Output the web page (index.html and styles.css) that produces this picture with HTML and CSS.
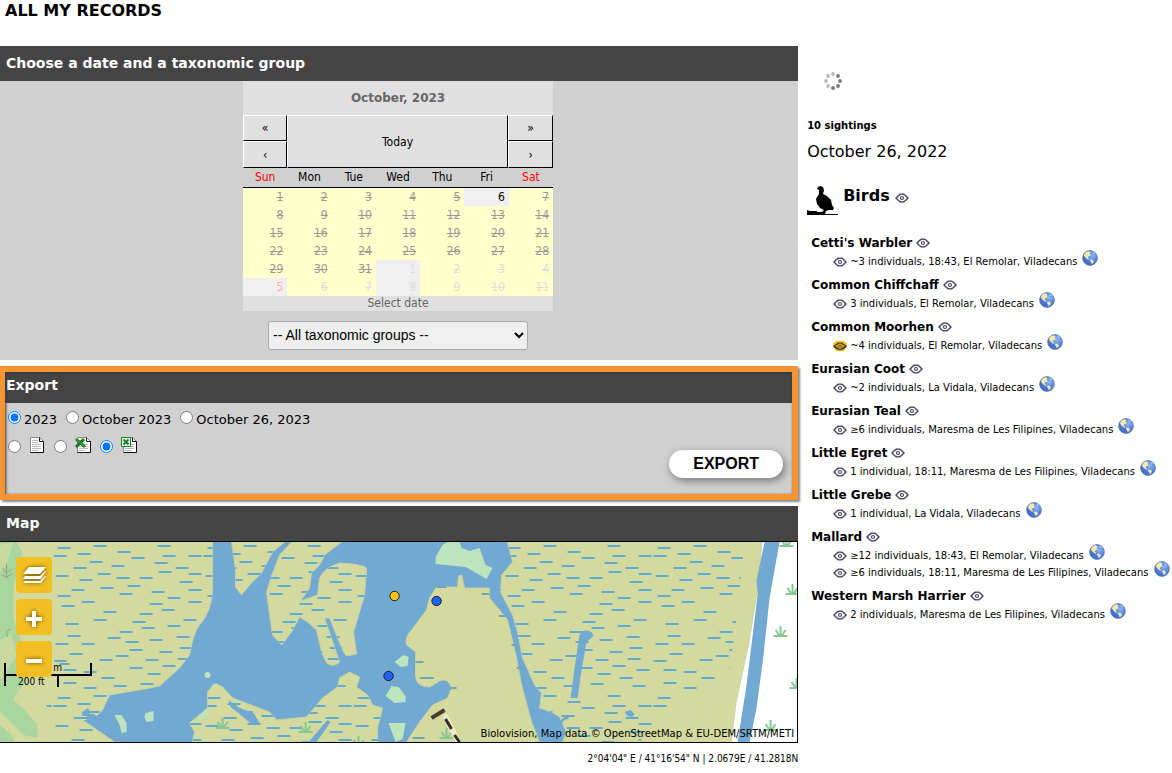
FILE: index.html
```html
<!DOCTYPE html>
<html lang="en">
<head>
<meta charset="utf-8">
<title>All my records</title>
<link rel="stylesheet" href="styles.css">
</head>
<body>
<svg class="defs" aria-hidden="true">
  <symbol id="eye" viewBox="0 0 14 10">
    <path d="M0 5L3 2 5 .5H9L11 2 14 5 11 8 9 9.500H5L3 8Z" fill="#4a4560"/>
    <path d="M2 5L4.500 2.500v5zM12 5L9.500 2.500v5z" fill="#fff"/>
    <circle cx="7" cy="5" r="2.700" fill="#4a4560" stroke="#fff" stroke-width="1.200"/>
    <circle cx="7" cy="5" r=".9" fill="#fff"/>
  </symbol>
  <symbol id="eye-marked" viewBox="0 0 14 10">
    <path d="M0 3L3 0H11L14 3 13 7 11 10H3L1 7Z" fill="#ffc20e"/>
    <path d="M0 5L3 3 5 1.500H9L11 3 14 5 11 8 9 9H5L3 8Z" fill="#4a4032"/>
    <path d="M2.500 5L4.500 3.500v3zM11.500 5L9.500 3.500v3z" fill="#ffc20e"/>
    <circle cx="7" cy="5.200" r="2.200" fill="#4a4032" stroke="#ffc20e"/>
    <circle cx="7" cy="5.200" r=".8" fill="#ffc20e"/>
  </symbol>
  <radialGradient id="sea" cx=".65" cy=".35" r=".8">
    <stop offset="0" stop-color="#8fb4f5"/><stop offset=".55" stop-color="#4a7bdc"/><stop offset="1" stop-color="#3a5fae"/>
  </radialGradient>
  <symbol id="globe" viewBox="0 0 16 16">
    <circle cx="8" cy="8" r="7.4" fill="url(#sea)" stroke="#5f7fb4" stroke-width=".8"/>
    <path d="M2.400 4Q4 1.500 6.500 1.200L8.500 2.200 7.800 3.800 8.800 5.200 6.500 6.200 5.600 8 7.500 8.800 6.200 9.800 3.500 7.800 2 5.500z" fill="#f3e9a6"/>
    <path d="M8.200 9.400l2.500 .4 1.300 1.600-1 1.800-1.400 1-.4-2-1.200-1.200z" fill="#f3e9a6"/>
    <path d="M10 1.600l3 2-1.200.4z" fill="#d7e6ff"/>
  </symbol>
  <symbol id="sheet" viewBox="0 0 14 16">
    <path d="M.5 .5h9l4 4v11H.5z" fill="#fff" stroke="#888"/>
    <path d="M9.500 .5v4h4v11H.5" fill="none" stroke="#111"/>
    <path d="M2 3.500h6M2 5.500h6M2 7.500h9M2 9.500h9M2 11.500h9M2 13.500h6" stroke="#bbb" fill="none"/>
  </symbol>
</svg>

<h1 class="page-title">ALL MY RECORDS</h1>
<div class="layout">
  <main class="main">
    <section class="panel">
      <h2 class="bar">Choose a date and a taxonomic group</h2>
      <div class="picker">
        <div class="calendar">
          <div class="cal-title">October, 2023</div>
          <div class="cal-nav">
            <button class="prev-year" aria-label="Previous year">«</button>
            <button class="today">Today</button>
            <button class="next-year" aria-label="Next year">»</button>
            <button class="prev-month" aria-label="Previous month">‹</button>
            <button class="next-month" aria-label="Next month">›</button>
          </div>
          <table class="days">
            <thead><tr><th class="weekend">Sun</th><th>Mon</th><th>Tue</th><th>Wed</th><th>Thu</th><th>Fri</th><th class="weekend">Sat</th></tr></thead>
            <tbody>
              <tr><td>1</td><td>2</td><td>3</td><td>4</td><td>5</td><td class="open current">6</td><td>7</td></tr>
              <tr><td>8</td><td>9</td><td>10</td><td>11</td><td>12</td><td>13</td><td>14</td></tr>
              <tr><td>15</td><td>16</td><td>17</td><td>18</td><td>19</td><td>20</td><td>21</td></tr>
              <tr><td>22</td><td>23</td><td>24</td><td>25</td><td>26</td><td>27</td><td>28</td></tr>
              <tr><td>29</td><td>30</td><td>31</td><td class="other open">1</td><td class="other">2</td><td class="other">3</td><td class="other">4</td></tr>
              <tr><td class="open sunday">5</td><td class="other">6</td><td class="other">7</td><td class="other open">8</td><td class="other">9</td><td class="other">10</td><td class="other">11</td></tr>
            </tbody>
          </table>
          <div class="cal-foot">Select date</div>
        </div>
        <select class="groups" aria-label="Taxonomic group"><option>-- All taxonomic groups --</option></select>
      </div>
    </section>

    <section class="panel export">
      <h2 class="bar">Export</h2>
      <form class="export-form">
        <div class="periods">
          <label><input type="radio" name="period" checked>2023</label>
          <label><input type="radio" name="period">October 2023</label>
          <label><input type="radio" name="period">October 26, 2023</label>
        </div>
        <div class="formats">
          <label><input type="radio" name="format" aria-label="Text"><svg class="doc" viewBox="0 0 16 16"><use href="#sheet" x="1" width="14" height="16"/></svg></label>
          <label><input type="radio" name="format" aria-label="XLS"><svg class="doc" viewBox="0 0 16 16"><use href="#sheet" x="2" width="14" height="16"/><path d="M1 2l9 8M9 2l-8 8" stroke="#17701d" stroke-width="3"/><path d="M1 2l9 8" stroke="#49b64c" stroke-width="1"/></svg></label>
          <label><input type="radio" name="format" aria-label="XLSX" checked><svg class="doc" viewBox="0 0 16 16"><use href="#sheet" x="2" width="14" height="16"/><path d="M.5 .5h9v9h-9z" fill="#e5f5e5" stroke="#17802a"/><path d="M2.500 2.500l5 5M7.500 2.500l-5 5" stroke="#17802a" stroke-width="2"/></svg></label>
        </div>
        <button type="button" class="export-btn">EXPORT</button>
      </form>
    </section>

    <section class="panel">
      <h2 class="bar">Map</h2>
      <div class="map">
        <svg class="tiles" viewBox="0 542 798 200" preserveAspectRatio="xMidYMid slice" role="img" aria-label="Map of the sightings">
          <defs>
            <path id="dashes" d="M5 7h13M41 5h13M1 15h13M25 13h13M65 11h13M37 21h13M59 25h13M79 17h13M105 5h13M110 15h13M102 22h13M123 27h13M136 15h13M21 27h13M3 35h13M27 39h13M45 33h13M64 37h13M75 45h13M87 37h13M106 31h13M136 33h13M127 41h13M136 49h13M19 49h13M48 47h13M5 55h13M67 53h13M99 51h13M115 57h13M136 61h13M29 61h13M9 65h13M51 71h13M87 73h13M97 63h13M109 69h13M131 79h13M41 79h13M13 83h13M80 81h13M67 91h13M89 87h13M115 85h13M124 96h13M55 97h13M15 95h13M29 103h13M3 103h13M73 101h13M97 99h13M17 113h13M47 119h13M63 115h13M77 109h13M107 111h13M11 129h13M1 120h13M49 137h13M77 127h13M93 119h13M31 147h13M11 142h13M61 145h13M110 125h13M127 107h13M125 118h13M134 129h13M95 133h13M117 137h13M88 143h13M130 145h13M31 131h13"/>
            <pattern id="marsh" x="53" y="541" width="150" height="150" patternUnits="userSpaceOnUse">
              <path d="M0 0" />
              <g stroke="#b5dfd8" stroke-width="4"><use href="#dashes"/></g>
              <g stroke="#78a8a0" stroke-width="2"><use href="#dashes"/></g>
            </pattern>
            <g id="reed" fill="none" stroke="#85c795" stroke-width="2"><path d="M-7 4H7M0 4V-6M-1 4L-5-2M1 4L5-2"/></g>
            <path id="b" d="M232 542L234 556 236 570V587L242 595 250 585 262 573 273 552 285 542Z"/>
            <path id="c" d="M292 542L280 555 272 576 267 592 270 615 273 635 282 645 292 632 300 617 308 622 317 630 322 652 327 663Q334 668 340 662L335 647 325 618H330L338 638 344 652 347 656 357 654 354 632 360 612 365 595 367 568Q362 564 340 563 324 568 320 578L318 595 301 601 310 588 312 572Q320 568 325 555L342 542Z"/>
            <path id="f" d="M193 742L195 732 190 723 208 708 208 692 215 683 223 687 233 698 270 712 277 720 307 717 323 698 338 687 340 678 350 672 360 677 357 687 368 695 373 705 383 708 378 728V742Z"/>
            <path id="a" d="M0 542H213V590Q212 612 200 625 194 632 190 655L180 668 160 686 145 689 110 695 103 710 97 716 88 708 82 712 83 720 92 726 115 742H0Z"/>
            <path id="e" d="M508 542L513 562 502 575 501 592 513 615 518 632 523 658 535 685 542 693 540 708 552 712 560 717 567 732 563 742H732L737 702 750 642 758 592 763 542Z"/>
          </defs>
          <path d="M0 542h798v200H0z" fill="#71a9d2"/>
          <g fill="#d4d99e" stroke="#c6d2a0">
            <use href="#a"/><use href="#b"/><use href="#c"/><use href="#f"/><use href="#e"/>
            <path d="M437 587H458L459 576 462 575 465 588H490V598L508 620 517 658 522 685 532 722 540 742H407L420 722 433 705 448 698 452 688Q448 677 440 681L430 687Q416 687 416 675V652L407 645Q405 637 412 630L427 610 430 598Z"/>
          </g>
          <path d="M0 542H17L23 552 14 587 14 620 27 655Q35 675 17 693L14 700 25 710 38 725V738L24 735 0 711Z" fill="#a9d59e"/>
          <path d="M0 545l14-3-8 25-6 5zM0 640l12-6 5 22-17 25z" fill="#c8d99e"/>
          <path d="M0 725l12 9 3 8H0z" fill="#a9d59e"/>
          <g fill="url(#marsh)"><use href="#b"/><use href="#c"/><use href="#f"/>
            <path d="M53 542H213V590Q212 612 200 625 194 632 190 655L180 668 160 686 145 689 110 695 100 712 92 726 102 742H60L45 700 55 680Z"/>
            <path d="M508 542L513 562 502 575 501 592 513 615 518 632 523 658 535 685 542 693 540 708 552 712 560 717 567 732 563 742H640L665 709 730 670 738 610 745 542Z"/>
          </g>
          <path d="M416 662h8M420 678h14M413 738h12M507 616h-8M512 645h6M517 668h6M450 688h7M437 587h10M482 594h8M60 664h10" stroke="#6fa8b0" stroke-width="2"/>
          <g fill="#71a9d2">
            <path d="M229 700L240 708 254 713 260 723 253 725 240 714 231 707zM328 720l3 2-14 20h-8zM580 635q4-7 12-3l2 4-7 6-5 28-4 28h-7l4-30z"/>
            <path d="M559 724q4-8 10-8v3q-7 0-7 8zM625 712l6-2 4 4-2 3-5-1z"/>
          </g>
          <g fill="#bde4bd">
            <path d="M436 557L443 545 448 542H460L462 548 470 551 480 548 486 565 493 568 487 579 475 572 466 567 436 564zM395 662l9-7 5 2-1 9-7 1zM386 696l6-10 7 1 7 9v6l-11 1zM389 723h17l-3 16-7 3zM115 715h7l5 8v9l-5 1-2-8zM146 713l8-2v10l-7 1-2-5zM198 718l8-9 3 1-3 9z"/>
            <circle cx="208" cy="675" r="3"/>
          </g>
          <path d="M763 542H798V742H732L737 702 750 642 758 592z" fill="#fff"/>
          <path d="M765 542H780L770 598 764 655 757 708 750 742H738L747 685 758 595 757 580z" fill="#71a9d2"/>
          <use href="#reed" x="793" y="590"/><use href="#reed" x="781" y="632"/><use href="#reed" x="797" y="684"/><use href="#reed" x="771" y="726"/><use href="#reed" x="787" y="542"/>
          <use href="#reed" x="223" y="724"/><use href="#reed" x="306" y="728"/><use href="#reed" x="359" y="742"/><use href="#reed" x="447" y="734"/>
          <path d="M7 564v15M3 568l4 5 5-4M2 575l5 2 5-3M11 629q-6 2-3 8" fill="none" stroke="#91aa79"/>
          <path d="M432 718l13-8" stroke="#4d3931" stroke-width="4"/>
          <path d="M445 715l14 27" stroke="#eee9c8" stroke-width="5"/>
          <path d="M446 719l6 10M455 735l5 7" stroke="#332d2b" stroke-width="3"/>
          <g stroke="#222"><circle cx="395" cy="596" r="4.700" fill="#ffc20e"/><circle cx="437" cy="601" r="4.700" fill="#1f62ff"/><circle cx="389" cy="676" r="4.700" fill="#1f62ff"/></g>
        </svg>
        <div class="scale">
          <svg viewBox="0 0 90 26" width="90" height="26"><path d="M1 1v23M1 13h87M87 1v13M54 13v12" fill="none" stroke="#000" stroke-width="2"/></svg>
          <span class="metric">20 m</span><span class="imperial">200 ft</span>
        </div>
        <div class="tools">
          <button aria-label="Layers"><svg viewBox="0 0 36 36"><g fill="#fff"><path d="M13 10h17l-6 7H7z"/><path d="M9 19h15l5-5h1l-5 8H7zM9 24h15l5-5h1l-5 7H7z"/></g></svg></button>
          <button aria-label="Zoom in"><svg viewBox="0 0 36 36"><path d="M10 20h16M18 12v16" stroke="#fff" stroke-width="4"/></svg></button>
          <button aria-label="Zoom out"><svg viewBox="0 0 36 36"><path d="M10 20h16" stroke="#fff" stroke-width="4"/></svg></button>
        </div>
        <div class="credit">Biolovision, Map data © OpenStreetMap &amp; EU-DEM/SRTM/METI</div>
      </div>
      <p class="coords">2°04'04" E / 41°16'54" N | 2.0679E / 41.2818N</p>
    </section>
  </main>

  <aside class="records">
    <svg class="spinner" viewBox="0 0 18 18" aria-label="Loading"><g fill="#bbb"><circle cx="9" cy="2" r="1.900"/><circle cx="4" cy="4" r="1.900"/><circle cx="2" cy="9" r="1.900"/><circle cx="4" cy="14" r="1.900"/></g><g fill="#777"><circle cx="14" cy="4" r="1.900"/><circle cx="16" cy="9" r="1.900"/><circle cx="14" cy="14" r="1.900"/><circle cx="9" cy="16" r="1.900"/></g></svg>
    <p class="count">10 sightings</p>
    <p class="date">October 26, 2022</p>
    <h2 class="group"><svg class="bird" viewBox="0 0 31 30" aria-hidden="true"><path d="M10 3l1-2 2-1 3 1 1 3-1 4 4 2 4 4 1 5 2 3-1 2h-4l-3 1-1 3h13v1H0v-5l3 1h7v1h5l2-2-4-2-3-4-1-5 3-5V4z"/></svg><span>Birds</span><svg class="eye"><use href="#eye"/></svg></h2>
    <h3>Cetti's Warbler<svg class="eye"><use href="#eye"/></svg></h3>
    <p class="obs"><svg class="eye"><use href="#eye"/></svg><span>~3 individuals, 18:43, El Remolar, Viladecans</span><svg class="globe"><use href="#globe"/></svg></p>
    <h3>Common Chiffchaff<svg class="eye"><use href="#eye"/></svg></h3>
    <p class="obs"><svg class="eye"><use href="#eye"/></svg><span>3 individuals, El Remolar, Viladecans</span><svg class="globe"><use href="#globe"/></svg></p>
    <h3>Common Moorhen<svg class="eye"><use href="#eye"/></svg></h3>
    <p class="obs"><svg class="eye"><use href="#eye-marked"/></svg><span>~4 individuals, El Remolar, Viladecans</span><svg class="globe"><use href="#globe"/></svg></p>
    <h3>Eurasian Coot<svg class="eye"><use href="#eye"/></svg></h3>
    <p class="obs"><svg class="eye"><use href="#eye"/></svg><span>~2 individuals, La Vidala, Viladecans</span><svg class="globe"><use href="#globe"/></svg></p>
    <h3>Eurasian Teal<svg class="eye"><use href="#eye"/></svg></h3>
    <p class="obs"><svg class="eye"><use href="#eye"/></svg><span>≥6 individuals, Maresma de Les Filipines, Viladecans</span><svg class="globe"><use href="#globe"/></svg></p>
    <h3>Little Egret<svg class="eye"><use href="#eye"/></svg></h3>
    <p class="obs"><svg class="eye"><use href="#eye"/></svg><span>1 individual, 18:11, Maresma de Les Filipines, Viladecans</span><svg class="globe"><use href="#globe"/></svg></p>
    <h3>Little Grebe<svg class="eye"><use href="#eye"/></svg></h3>
    <p class="obs"><svg class="eye"><use href="#eye"/></svg><span>1 individual, La Vidala, Viladecans</span><svg class="globe"><use href="#globe"/></svg></p>
    <h3>Mallard<svg class="eye"><use href="#eye"/></svg></h3>
    <p class="obs"><svg class="eye"><use href="#eye"/></svg><span>≥12 individuals, 18:43, El Remolar, Viladecans</span><svg class="globe"><use href="#globe"/></svg></p>
    <p class="obs"><svg class="eye"><use href="#eye"/></svg><span>≥6 individuals, 18:11, Maresma de Les Filipines, Viladecans</span><svg class="globe"><use href="#globe"/></svg></p>
    <h3>Western Marsh Harrier<svg class="eye"><use href="#eye"/></svg></h3>
    <p class="obs"><svg class="eye"><use href="#eye"/></svg><span>2 individuals, Maresma de Les Filipines, Viladecans</span><svg class="globe"><use href="#globe"/></svg></p>
  </aside>
</div>
</body>
</html>
```
FILE: styles.css
```css
* { box-sizing: border-box; }
body { margin: 0; background: #fff; color: #000; font-family: Verdana, "DejaVu Sans", sans-serif; overflow-x: hidden; }
h1, h2, h3, p { margin: 0; }
svg { flex: none; }
.defs { position: absolute; width: 0; height: 0; }
.page-title { padding: 1px 5px 25px; font-size: 16px; line-height: 20px; }
.layout { display: grid; grid-template-columns: minmax(0, 68.1%) minmax(0, 1fr); }
.main { display: flex; flex-direction: column; gap: 6px; }
.bar { height: 35px; padding: 0 6px; background: #444; color: #fff; font-size: 14px; line-height: 34px; }
.picker { display: flex; flex-direction: column; align-items: center; gap: 10px; padding: 0 2px 10px 0; background: #d0d0d0; }
.calendar { width: 310px; background: #e0e0e0; color: #000; font: 12px/18px "DejaVu Sans Condensed", sans-serif; }
.cal-title { height: 34px; color: #666; font: bold 12px/34px Verdana, "DejaVu Sans", sans-serif; text-align: center; }
.cal-nav { display: grid; grid-template-columns: 44px 1fr 45px; grid-template-rows: 26px 27px; }
.cal-nav button { padding: 0; border: 1px solid; border-color: #fff #000 #000 #fff; border-radius: 0; background: #e0e0e0; color: #000; font: inherit; }
.cal-nav .today { grid-row: 1 / 3; grid-column: 2; }
.cal-nav .prev-month { grid-column: 1; }
.cal-nav .next-month { grid-column: 3; }
.days { width: 100%; table-layout: fixed; border-collapse: collapse; }
.days th { height: 19px; padding: 0; border-bottom: 1px solid #000; background: #d0d0d0; font-weight: normal; }
.days .weekend { color: #f00; }
.days td { height: 18px; padding: 0 4px 0 0; background: #ffc; color: #999; text-align: right; text-decoration: line-through; }
.days .other { color: #ddd; }
.days .open { background: #efefef; text-decoration: none; }
.days .current { color: #000; }
.days .sunday { color: #faa; }
.cal-foot { height: 15px; color: #666; line-height: 15px; text-align: center; }
.groups { width: 260px; height: 29px; padding: 0; border: 1px solid #aaa; border-radius: 3px; background: #efefef; color: #000; font: 14px "Liberation Sans", Arial, sans-serif; }

.export { position: relative; height: 134px; padding-top: 2px; background: #444; }
.export::after { content: ""; position: absolute; inset: 0; border: 6px solid #f79433; border-left-width: 5px; box-shadow: 2px 2px 2px #888, inset 1px 1px 3px #333; pointer-events: none; }
.export-form { height: 97px; padding: 6px 15px 0 8px; background: #d0d0d0; font-size: 13px; }
.periods, .formats { display: flex; gap: 9px; }
.periods { line-height: 21px; }
.periods label { display: flex; gap: 3px; }
.export-form input { width: 13px; height: 13px; margin: 2px 0 0; }
.formats { padding-top: 6px; }
.formats label { display: flex; gap: 8px; }
.formats input { margin-top: 4px; }
.doc { width: 16px; height: 16px; margin-top: 1px; }
.export-btn { display: block; width: 114px; height: 28px; margin: -3px 0 0 auto; border: 0; border-radius: 14px; background: #fff; color: #000; box-shadow: 2px 3px 8px #777; font: bold 16px "Liberation Sans", Arial, sans-serif; }

.map { position: relative; height: 202px; border: 1px solid #000; border-left: 0; overflow: hidden; }
.tiles { display: block; width: 100%; height: 200px; }
.scale { position: absolute; left: 4px; top: 120px; height: 26px; font: 10px/12px "DejaVu Sans Condensed", sans-serif; }
.metric { position: absolute; left: 35px; top: 0; white-space: nowrap; }
.imperial { position: absolute; left: 14px; top: 14px; white-space: nowrap; }
.tools { position: absolute; left: 16px; top: 15px; display: flex; flex-direction: column; gap: 6px; }
.tools button { width: 36px; height: 36px; padding: 0; border: 0; border-radius: 4px; background: #f2bf23; }
.tools svg { display: block; filter: drop-shadow(0 0 2px #654a00); }
.credit { position: absolute; right: 3px; bottom: 2px; font-size: 10px; line-height: 13px; }
.coords { padding-top: 9px; font: 10px/13px "DejaVu Sans Condensed", sans-serif; text-align: right; }

.records { padding: 26px 0 0 9px; white-space: nowrap; }
.spinner { display: block; width: 18px; height: 18px; margin: 0 17px; }
.count { padding-top: 29px; font-size: 10px; font-weight: bold; line-height: 13px; }
.date { padding: 10px 0 22px; font-size: 16px; line-height: 20px; }
.group { display: flex; height: 32px; gap: 5px; font-size: 16px; line-height: 24px; }
.bird { width: 31px; height: 30px; margin-top: 2px; }
.group .eye { margin-top: 9px; }
.eye { width: 14px; height: 10px; }
.globe { width: 16px; height: 16px; margin: -8px 0 0 2px; }
h3 { display: flex; align-items: center; gap: 4px; padding: 7px 0 2px 4px; font-size: 12px; line-height: 16px; }
.group + h3 { padding-top: 19px; }
.obs { display: flex; align-items: center; gap: 3px; height: 17px; padding-left: 26px; font-size: 10px; line-height: 17px; }
```
